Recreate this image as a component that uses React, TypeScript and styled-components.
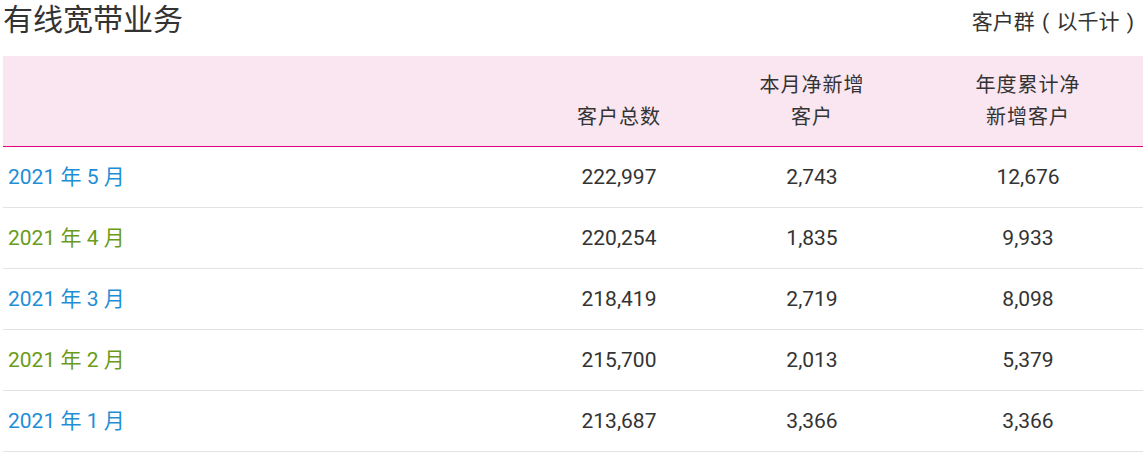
import React from 'react';
import styled, { createGlobalStyle } from 'styled-components';

const GlobalStyle = createGlobalStyle`
  body {
    margin: 0;
    background: #fff;
    font-family: Roboto, "Noto Sans CJK SC", sans-serif;
    color: #333;
  }
`;

// Styles
const Page = styled.div`
  width: 1140px;
  padding: 0 5px 0 3px;
`;

const TitleBar = styled.div`
  display: flex;
  justify-content: space-between;
  align-items: center;
  height: 40px;
  margin-bottom: 16px;
`;

const Title = styled.h2`
  margin: 0;
  font-size: 30px;
  font-weight: 400;
  line-height: 40px;
  color: #333;
`;

const Unit = styled.span`
  font-size: 21px;
  color: #333;
  margin-right: 9px;
  word-spacing: 2px;
`;

const Row = styled.div<{ $head?: boolean }>`
  display: grid;
  grid-template-columns: 524px 184px 202px 230px;
  align-items: ${(p) => (p.$head ? 'end' : 'center')};
  height: ${(p) => (p.$head ? '90px' : '60px')};
  background: ${(p) => (p.$head ? '#fae6f1' : 'transparent')};
  border-bottom: 1px solid ${(p) => (p.$head ? '#e4007f' : '#e2e2e2')};
`;

const HeadCell = styled.div`
  text-align: center;
  font-size: 20px;
  line-height: 32px;
  padding-bottom: 13px;
  letter-spacing: 1px;
`;

const Month = styled.div<{ $tone: 'blue' | 'green' }>`
  padding-left: 5px;
  font-size: 21px;
  line-height: 30px;
  color: ${(p) => (p.$tone === 'blue' ? '#1e8ed6' : '#6a9b1a')};
`;

const Num = styled.div`
  text-align: center;
  font-size: 21px;
  line-height: 30px;
  color: #333;
`;

const rows = [
  { month: '2021 年 5 月', total: '222,997', net: '2,743', ytd: '12,676' },
  { month: '2021 年 4 月', total: '220,254', net: '1,835', ytd: '9,933' },
  { month: '2021 年 3 月', total: '218,419', net: '2,719', ytd: '8,098' },
  { month: '2021 年 2 月', total: '215,700', net: '2,013', ytd: '5,379' },
  { month: '2021 年 1 月', total: '213,687', net: '3,366', ytd: '3,366' },
];

const App: React.FC = () => {
  return (
    <Page>
      <GlobalStyle />
      <TitleBar>
        <Title>有线宽带业务</Title>
        <Unit>客户群 ( 以千计 )</Unit>
      </TitleBar>

      <Row $head>
        <HeadCell />
        <HeadCell>客户总数</HeadCell>
        <HeadCell>
          本月净新增
          <br />
          客户
        </HeadCell>
        <HeadCell>
          年度累计净
          <br />
          新增客户
        </HeadCell>
      </Row>

      {rows.map((r, i) => (
        <Row key={r.month}>
          <Month $tone={i % 2 === 0 ? 'blue' : 'green'}>{r.month}</Month>
          <Num>{r.total}</Num>
          <Num>{r.net}</Num>
          <Num>{r.ytd}</Num>
        </Row>
      ))}
    </Page>
  );
};

export default App;
